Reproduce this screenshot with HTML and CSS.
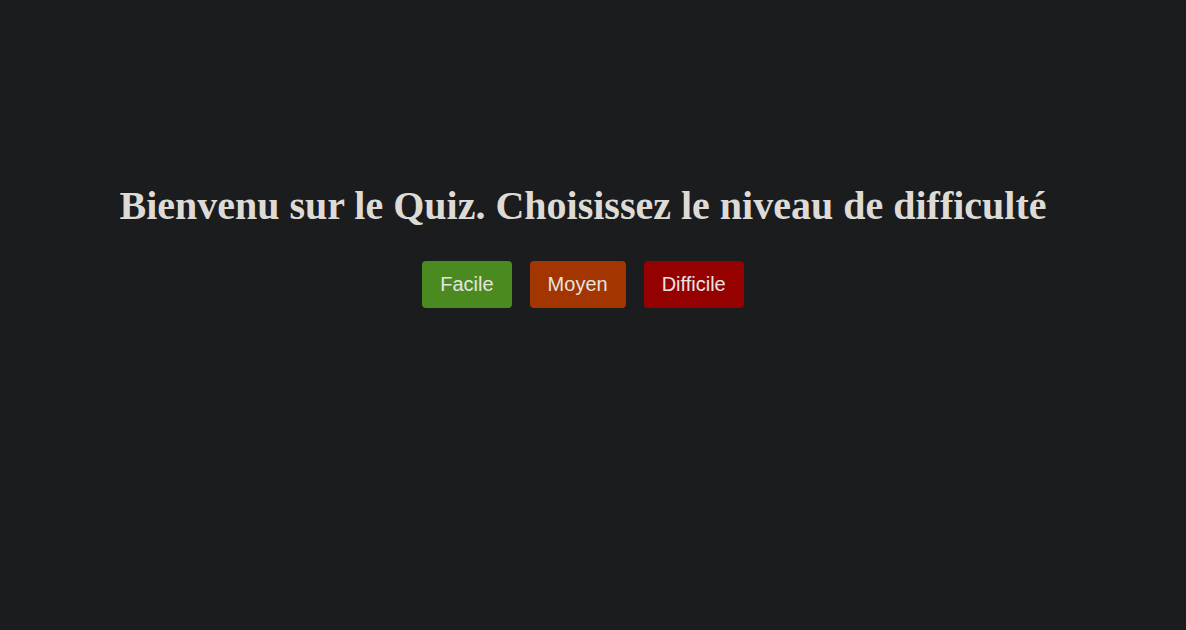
FILE: index.html
```html
<!DOCTYPE html>
<html lang="fr">
<head>
<meta charset="utf-8">
<title>Quiz</title>
<link rel="stylesheet" href="styles.css">
</head>
<body>
<main class="home">
  <h1 class="title">Bienvenu sur le Quiz. Choisissez le niveau de difficulté</h1>
  <div class="levels">
    <button class="level level-easy">Facile</button>
    <button class="level level-medium">Moyen</button>
    <button class="level level-hard">Difficile</button>
  </div>
</main>
</body>
</html>
```
FILE: styles.css
```css
html, body {
  margin: 0;
  padding: 0;
  background: #1b1c1e;
}
body {
  color: #dedbd6;
  font-family: "Liberation Serif", "Times New Roman", serif;
}
.home {
  width: 1166px;
  padding-top: 181px;
  display: flex;
  flex-direction: column;
  align-items: center;
}
.title {
  margin: 0;
  font-size: 40px;
  font-weight: bold;
  line-height: 50px;
  white-space: nowrap;
}
.levels {
  margin-top: 30px;
  display: flex;
  gap: 18px;
}
.level {
  height: 47px;
  padding: 0 18px;
  border: none;
  border-radius: 4px;
  color: #e6e3e0;
  font-family: "Liberation Sans", Arial, sans-serif;
  font-size: 20px;
}
.level-easy { background: #4b8a1f; }
.level-medium { background: #a33500; }
.level-hard { background: #950000; }
```
